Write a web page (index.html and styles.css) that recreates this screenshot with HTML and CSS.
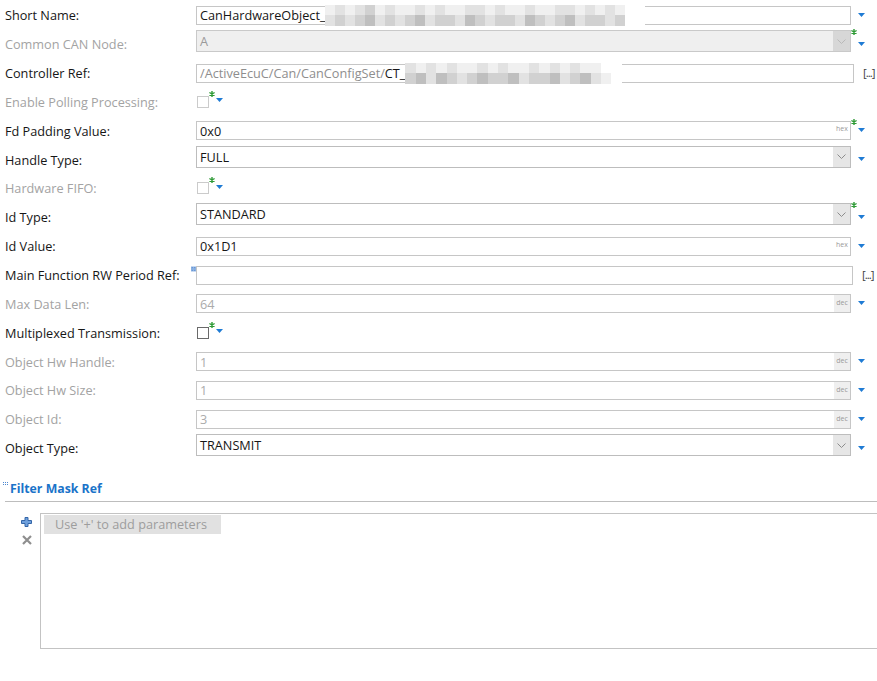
FILE: index.html
```html
<!DOCTYPE html>
<html>
<head>
<meta charset="utf-8">
<link rel="stylesheet" href="styles.css">
</head>
<body>
<div class="form">
  <div class="row">
    <div class="lbl">Short Name:</div>
    <div class="field"><span class="val">CanHardwareObject_</span>
      <span class="mz mz-a">
        <i class="c1"></i><i class="c2"></i><i class="c1"></i><i class="c2"></i><i class="c3"></i><i class="c1"></i><i class="c2"></i><i class="c1"></i><i class="c1"></i><i class="c2"></i><i class="c1"></i><i class="c2"></i><i class="c1"></i><i class="c1"></i><i class="c2"></i><i class="c2"></i><i class="c1"></i><i class="c2"></i><i class="c1"></i><i class="c1"></i><i class="c2"></i><i class="c1"></i><i class="c1"></i><i class="c2"></i><i class="c2"></i><i class="c1"></i><i class="c2"></i><i class="c1"></i><i class="c2"></i><i class="c1"></i><i class="c0"></i><i class="c0"></i>
        <i class="c2"></i><i class="c3"></i><i class="c2"></i><i class="c3"></i><i class="c4"></i><i class="c2"></i><i class="c3"></i><i class="c2"></i><i class="c3"></i><i class="c4"></i><i class="c2"></i><i class="c3"></i><i class="c3"></i><i class="c2"></i><i class="c4"></i><i class="c3"></i><i class="c2"></i><i class="c3"></i><i class="c3"></i><i class="c2"></i><i class="c4"></i><i class="c3"></i><i class="c2"></i><i class="c3"></i><i class="c4"></i><i class="c2"></i><i class="c3"></i><i class="c3"></i><i class="c2"></i><i class="c3"></i><i class="c0"></i><i class="c0"></i>
      </span>
    </div>
    <span class="ast"></span><span class="arr"><svg width="7" height="4" viewBox="0 0 7 4"><path d="M0 0H7L3.5 4Z"/></svg></span>
  </div>

  <div class="row">
    <div class="lbl dis">Common CAN Node:</div>
    <div class="field combo cdis"><span class="val dv2">A</span><span class="btn"><svg width="9" height="5" viewBox="0 0 9 5"><path d="M0.5 0.5L4.5 4.5L8.5 0.5"/></svg></span></div>
    <span class="ast ast-c"><svg width="6" height="6" viewBox="0 0 6 6"><path d="M3 0V6M0.4 1.5L5.6 4.5M0.4 4.5L5.6 1.5"/></svg></span><span class="arr"><svg width="7" height="4" viewBox="0 0 7 4"><path d="M0 0H7L3.5 4Z"/></svg></span>
  </div>

  <div class="row">
    <div class="lbl">Controller Ref:</div>
    <div class="field wide"><span class="val gv">/ActiveEcuC/Can/CanConfigSet/</span><span class="val">CT_</span>
      <span class="mz mz-b">
        <i class="c2"></i><i class="c1"></i><i class="c2"></i><i class="c1"></i><i class="c2"></i><i class="c1"></i><i class="c1"></i><i class="c2"></i><i class="c1"></i><i class="c2"></i><i class="c1"></i><i class="c1"></i><i class="c2"></i><i class="c1"></i><i class="c2"></i><i class="c1"></i><i class="c2"></i><i class="c1"></i><i class="c1"></i><i class="c0"></i><i class="c0"></i>
        <i class="c3"></i><i class="c4"></i><i class="c2"></i><i class="c4"></i><i class="c3"></i><i class="c2"></i><i class="c3"></i><i class="c4"></i><i class="c3"></i><i class="c3"></i><i class="c4"></i><i class="c2"></i><i class="c3"></i><i class="c3"></i><i class="c4"></i><i class="c2"></i><i class="c3"></i><i class="c4"></i><i class="c2"></i><i class="c1"></i><i class="c0"></i>
      </span>
    </div>
    <span class="dots">[...]</span>
  </div>

  <div class="row">
    <div class="lbl dis">Enable Polling Processing:</div>
    <span class="chk"></span>
    <span class="ast ast-k"><svg width="6" height="6" viewBox="0 0 6 6"><path d="M3 0V6M0.4 1.5L5.6 4.5M0.4 4.5L5.6 1.5"/></svg></span><span class="arr arr-k"><svg width="7" height="4" viewBox="0 0 7 4"><path d="M0 0H7L3.5 4Z"/></svg></span>
  </div>

  <div class="row">
    <div class="lbl">Fd Padding Value:</div>
    <div class="field"><span class="val">0x0</span><span class="unit">hex</span></div>
    <span class="ast ast-t"><svg width="6" height="6" viewBox="0 0 6 6"><path d="M3 0V6M0.4 1.5L5.6 4.5M0.4 4.5L5.6 1.5"/></svg></span><span class="arr"><svg width="7" height="4" viewBox="0 0 7 4"><path d="M0 0H7L3.5 4Z"/></svg></span>
  </div>

  <div class="row">
    <div class="lbl">Handle Type:</div>
    <div class="field combo"><span class="val">FULL</span><span class="btn"><svg width="9" height="5" viewBox="0 0 9 5"><path d="M0.5 0.5L4.5 4.5L8.5 0.5"/></svg></span></div>
    <span class="ast"></span><span class="arr"><svg width="7" height="4" viewBox="0 0 7 4"><path d="M0 0H7L3.5 4Z"/></svg></span>
  </div>

  <div class="row">
    <div class="lbl dis">Hardware FIFO:</div>
    <span class="chk"></span>
    <span class="ast ast-k"><svg width="6" height="6" viewBox="0 0 6 6"><path d="M3 0V6M0.4 1.5L5.6 4.5M0.4 4.5L5.6 1.5"/></svg></span><span class="arr arr-k"><svg width="7" height="4" viewBox="0 0 7 4"><path d="M0 0H7L3.5 4Z"/></svg></span>
  </div>

  <div class="row">
    <div class="lbl">Id Type:</div>
    <div class="field combo"><span class="val">STANDARD</span><span class="btn"><svg width="9" height="5" viewBox="0 0 9 5"><path d="M0.5 0.5L4.5 4.5L8.5 0.5"/></svg></span></div>
    <span class="ast ast-c"><svg width="6" height="6" viewBox="0 0 6 6"><path d="M3 0V6M0.4 1.5L5.6 4.5M0.4 4.5L5.6 1.5"/></svg></span><span class="arr"><svg width="7" height="4" viewBox="0 0 7 4"><path d="M0 0H7L3.5 4Z"/></svg></span>
  </div>

  <div class="row">
    <div class="lbl">Id Value:</div>
    <div class="field"><span class="val">0x1D1</span><span class="unit">hex</span></div>
    <span class="ast"></span><span class="arr"><svg width="7" height="4" viewBox="0 0 7 4"><path d="M0 0H7L3.5 4Z"/></svg></span>
  </div>

  <div class="row">
    <div class="lbl"><span>Main Function RW Period Ref:</span><span class="ref-ico"><svg width="6" height="6" viewBox="0 0 6 6"><rect x="0" y="0" width="6" height="6" fill="#8fb4e3"/><rect x="1" y="1" width="1" height="1" fill="#3a74c4"/><rect x="4" y="1" width="1" height="1" fill="#3a74c4"/><rect x="1" y="4" width="1" height="1" fill="#3a74c4"/><rect x="4" y="4" width="1" height="1" fill="#3a74c4"/></svg></span></div>
    <div class="field wide2"></div>
    <span class="dots">[...]</span>
  </div>

  <div class="row">
    <div class="lbl dis">Max Data Len:</div>
    <div class="field"><span class="val dv">64</span><span class="unit dec">dec</span></div>
    <span class="ast"></span><span class="arr"><svg width="7" height="4" viewBox="0 0 7 4"><path d="M0 0H7L3.5 4Z"/></svg></span>
  </div>

  <div class="row">
    <div class="lbl">Multiplexed Transmission:</div>
    <span class="chk on"></span>
    <span class="ast ast-k"><svg width="6" height="6" viewBox="0 0 6 6"><path d="M3 0V6M0.4 1.5L5.6 4.5M0.4 4.5L5.6 1.5"/></svg></span><span class="arr arr-k"><svg width="7" height="4" viewBox="0 0 7 4"><path d="M0 0H7L3.5 4Z"/></svg></span>
  </div>

  <div class="row">
    <div class="lbl dis">Object Hw Handle:</div>
    <div class="field"><span class="val dv">1</span><span class="unit dec">dec</span></div>
    <span class="ast"></span><span class="arr"><svg width="7" height="4" viewBox="0 0 7 4"><path d="M0 0H7L3.5 4Z"/></svg></span>
  </div>

  <div class="row">
    <div class="lbl dis">Object Hw Size:</div>
    <div class="field"><span class="val dv">1</span><span class="unit dec">dec</span></div>
    <span class="ast"></span><span class="arr"><svg width="7" height="4" viewBox="0 0 7 4"><path d="M0 0H7L3.5 4Z"/></svg></span>
  </div>

  <div class="row">
    <div class="lbl dis">Object Id:</div>
    <div class="field"><span class="val dv">3</span><span class="unit dec">dec</span></div>
    <span class="ast"></span><span class="arr"><svg width="7" height="4" viewBox="0 0 7 4"><path d="M0 0H7L3.5 4Z"/></svg></span>
  </div>

  <div class="row">
    <div class="lbl">Object Type:</div>
    <div class="field combo"><span class="val">TRANSMIT</span><span class="btn"><svg width="9" height="5" viewBox="0 0 9 5"><path d="M0.5 0.5L4.5 4.5L8.5 0.5"/></svg></span></div>
    <span class="ast"></span><span class="arr"><svg width="7" height="4" viewBox="0 0 7 4"><path d="M0 0H7L3.5 4Z"/></svg></span>
  </div>
</div>

<div class="section">
  <div class="sec-head">
    <span class="sec-ico"><svg width="6" height="4" viewBox="0 0 6 4"><rect x="0" y="0" width="1" height="1" fill="#4a86d0"/><rect x="2" y="0" width="1" height="1" fill="#4a86d0"/><rect x="4" y="0" width="1" height="1" fill="#4a86d0"/><rect x="0" y="2" width="1" height="1" fill="#4a86d0"/><rect x="2" y="2" width="1" height="1" fill="#4a86d0"/><rect x="4" y="2" width="1" height="1" fill="#4a86d0"/></svg></span>
    <span class="sec-title">Filter Mask Ref</span>
  </div>
  <div class="sec-line"></div>
  <div class="list-wrap">
    <div class="tools">
      <svg class="plus" width="11" height="10" viewBox="0 0 11 10"><path d="M4 0.5H7V3.5H10.5V6.5H7V9.5H4V6.5H0.5V3.5H4Z" fill="#6fa0dc" stroke="#3466a8" stroke-width="1"/></svg>
      <svg class="del" width="10" height="10" viewBox="0 0 10 10"><path d="M1 1L9 9M9 1L1 9" stroke="#8e8e8e" stroke-width="2.2"/></svg>
    </div>
    <div class="list">
      <div class="ph">Use '+' to add parameters</div>
    </div>
  </div>
</div>
</body>
</html>
```

FILE: styles.css
```css
html, body {
  margin: 0;
  padding: 0;
  background: #ffffff;
}
body {
  width: 877px;
  height: 681px;
  overflow: hidden;
  font-family: "Open Sans", "Noto Sans", sans-serif;
  font-size: 12.7px;
  color: #161616;
}
.form {
  padding-top: 1px;
}
.row {
  display: flex;
  align-items: center;
  height: 28.85px;
}
.lbl {
  flex: none;
  width: 196px;
  box-sizing: border-box;
  padding-left: 5px;
  white-space: nowrap;
  align-self: stretch;
  display: flex;
  align-items: center;
  justify-content: space-between;
}
.lbl.dis {
  color: #a3a3a3;
}
.ref-ico {
  align-self: flex-start;
  margin-top: 5px;
  width: 5px;
  height: 6px;
  overflow: hidden;
  display: flex;
}
.field {
  flex: none;
  width: 655px;
  height: 19px;
  box-sizing: border-box;
  border: 1px solid #c6c6c6;
  background: #fff;
  display: flex;
  align-items: center;
  padding-left: 3px;
  white-space: nowrap;
}
.field.wide {
  width: 658px;
}
.field.wide2 {
  width: 657px;
}
.val {
  color: #161616;
}
.val.gv {
  color: #8e8e8e;
}
.val.dv {
  color: #ababab;
}
.val.dv2 {
  color: #9a9a9a;
}
.combo {
  height: 22px;
  margin-top: -6px;
  border-color: #bdbdbd;
}
.combo .btn {
  margin-left: auto;
  width: 17px;
  align-self: stretch;
  background: #e6e6e6;
  display: flex;
  align-items: center;
  justify-content: center;
}
.combo .btn svg path {
  fill: none;
  stroke: #8c8c8c;
  stroke-width: 1;
}
.combo.cdis {
  background: #efefef;
  border-color: #c9c9c9;
}
.combo.cdis .btn {
  background: #d7d7d7;
}
.combo.cdis .btn svg path {
  stroke: #b9b9b9;
}
.unit {
  margin-left: auto;
  width: 16px;
  align-self: stretch;
  font-size: 7px;
  line-height: 7px;
  color: #9a9a9a;
  text-align: center;
  padding-top: 3px;
  box-sizing: border-box;
}
.unit.dec {
  background: #efefef;
  padding-top: 4px;
}
.ast {
  flex: none;
  width: 7px;
  height: 6px;
  display: flex;
}
.ast svg path {
  stroke: #2e9a35;
  stroke-width: 1.4;
}
.ast-t {
  margin-bottom: 18px;
}
.ast-c {
  margin-bottom: 24px;
}
.ast-k {
  margin-bottom: 16px;
}
.arr {
  flex: none;
  width: 7px;
  height: 4px;
  display: flex;
  margin-top: -1px;
}
.arr svg path {
  fill: #1f7bd4;
}
.arr-k {
  margin-top: -3px;
}
.chk {
  flex: none;
  width: 12px;
  height: 12px;
  box-sizing: border-box;
  border: 1px solid #cbcbcb;
  background: #fff;
  margin-left: 1px;
}
.chk.on {
  border-color: #6a6a6a;
}
.dots {
  margin-left: 9px;
  font-size: 11.5px;
  color: #3e3e3e;
  letter-spacing: -1px;
  margin-top: -2px;
}

.section {
  margin-top: 18px;
}
.sec-head {
  display: flex;
  align-items: flex-start;
  height: 20px;
}
.sec-ico {
  display: flex;
  margin-left: 3px;
  margin-top: 1px;
  width: 6px;
}
.sec-title {
  margin-left: 1px;
  margin-top: -1px;
  font-weight: 700;
  font-size: 12.3px;
  color: #1a73c9;
}
.sec-line {
  margin-left: 5px;
  height: 1px;
  background: #bdbdbd;
}
.list-wrap {
  display: flex;
  margin-top: 11px;
}
.tools {
  flex: none;
  width: 40px;
  display: flex;
  flex-direction: column;
  align-items: flex-start;
  padding-left: 21px;
  box-sizing: border-box;
  padding-top: 4px;
}
.tools .del {
  margin-top: 8px;
  margin-left: 1px;
}
.list {
  flex: none;
  width: 860px;
  height: 136px;
  box-sizing: border-box;
  border: 1px solid #c3c3c3;
  padding: 1px 0 0 3px;
}
.ph {
  width: 177px;
  height: 19px;
  box-sizing: border-box;
  background: #e1e1e1;
  color: #9d9d9d;
  padding-left: 11px;
  line-height: 19px;
  white-space: nowrap;
}
.mz {
  display: grid;
  grid-template-rows: 10px 11px;
  height: 21px;
  flex: none;
}
.mz-a {
  grid-template-columns: repeat(32, 10px);
}
.mz-b {
  grid-template-columns: repeat(21, 10.3px);
}
.mz i.c0 { background: #ffffff; }
.mz i.c1 { background: #f0f0f0; }
.mz i.c2 { background: #e2e2e2; }
.mz i.c3 { background: #d1d1d1; }
.mz i.c4 { background: #bfbfbf; }
```
